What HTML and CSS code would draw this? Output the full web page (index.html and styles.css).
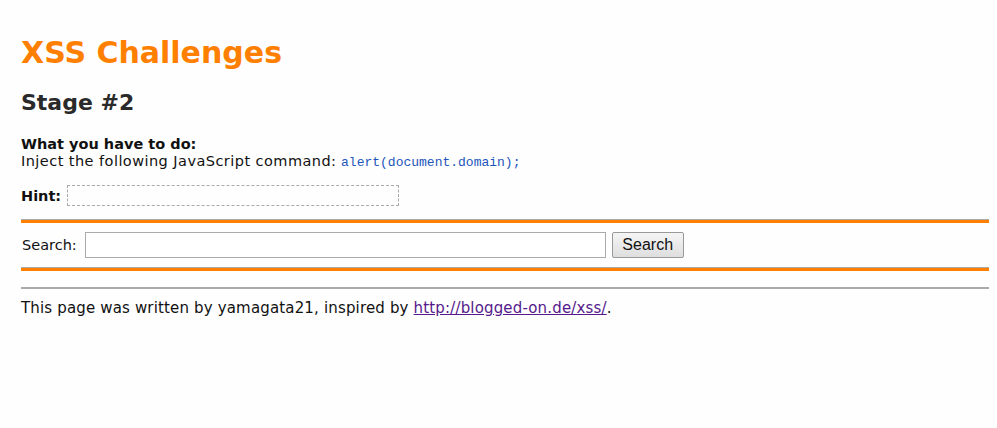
FILE: index.html
```html
<!DOCTYPE html>
<html>
<head>
<meta charset="utf-8">
<link rel="stylesheet" href="styles.css">
</head>
<body>
<h1 class="title">XSS Challenges</h1>
<h2 class="stage">Stage #2</h2>
<div class="task">
  <b>What you have to do:</b><br>
  <span class="inject">Inject the following JavaScript command:</span> <code class="cmd">alert(document.domain);</code>
</div>
<div class="hint"><b>Hint:</b> <span class="hintbox"></span></div>
<div class="bar"></div>
<form class="searchbar">
  <label class="label">Search:</label>
  <input class="query" type="text">
  <button class="btn" type="button">Search</button>
</form>
<div class="bar"></div>
<hr class="rule">
<p class="footer">This page was written by yamagata21, inspired by <a href="#" class="link">http://blogged-on.de/xss/</a>.</p>
</body>
</html>
```
FILE: styles.css
```css
body {
  margin: 0;
  padding: 0 8px 0 21px;
  background: #fefefe;
  font-family: "DejaVu Sans", Verdana, sans-serif;
  font-size: 14.5px;
  color: #111;
}
.title {
  color: #ff8000;
  font-size: 30px;
  font-weight: bold;
  margin: 35px 0 0;
  line-height: 36px;
}
.stage {
  color: #2a2a2a;
  font-size: 22px;
  margin: 18px 0 0;
  line-height: 28px;
}
.task {
  margin-top: 19px;
  line-height: 17px;
}
.inject { letter-spacing: 0.45px; }
.cmd {
  font-family: "Liberation Mono", monospace;
  font-size: 13px;
  color: #2255bb;
}
.hint {
  margin-top: 14px;
  display: flex;
  align-items: center;
  gap: 6px;
}
.hintbox {
  display: inline-block;
  width: 330px;
  height: 19px;
  border: 1px dashed #aaa;
}
.bar {
  border-top: 1px solid #aaa;
  border-bottom: 3px solid #ff8000;
}
.hint + .bar { margin-top: 13px; }
.searchbar {
  margin: 0;
  padding: 9px 0 9px 1px;
  display: flex;
  align-items: center;
}
.label { margin-right: 8px; }
.query {
  box-sizing: border-box;
  width: 521px;
  height: 26px;
  border: 1px solid #aaa;
  padding: 2px;
  margin: 0 6px 0 0;
}
.btn {
  box-sizing: border-box;
  font-family: "Liberation Sans", Arial, sans-serif;
  font-size: 16px;
  height: 26px;
  width: 72px;
  padding: 0;
  border: 1px solid #999;
  border-radius: 2px;
  background: linear-gradient(#f5f5f5, #dedede);
  color: #111;
}
.rule {
  margin: 16px 0 0;
  border: 0;
  border-top: 2px solid #aaa;
  height: 0;
}
.footer {
  margin: 10px 0 0;
  line-height: 18px;
  font-size: 15px;
  letter-spacing: 0.16px;
}
.link { color: #551a8b; }
```
